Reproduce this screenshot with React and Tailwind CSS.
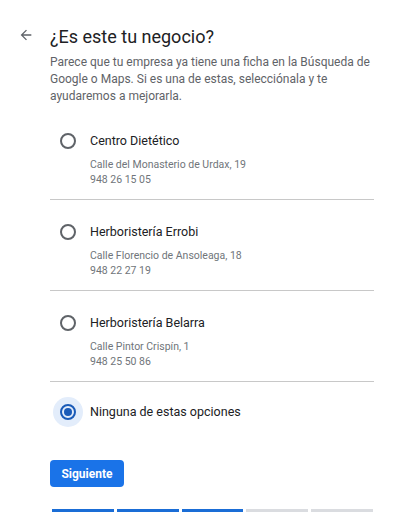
import React, { useState } from 'react';

const businesses = [
    { id: 'centro', name: 'Centro Dietético', address: 'Calle del Monasterio de Urdax, 19', phone: '948 26 15 05' },
    { id: 'errobi', name: 'Herboristería Errobi', address: 'Calle Florencio de Ansoleaga, 18', phone: '948 22 27 19' },
    { id: 'belarra', name: 'Herboristería Belarra', address: 'Calle Pintor Crispín, 1', phone: '948 25 50 86' },
];

const Radio = ({ checked }) => (
    <div className={`w-[30px] h-[30px] rounded-full flex items-center justify-center shrink-0 ${checked ? 'bg-[#e3edfb]' : ''}`}>
        <div className={`w-[16px] h-[16px] rounded-full border-2 flex items-center justify-center ${checked ? 'border-[#1a5bb8]' : 'border-[#5f6368]'}`}>
            {checked && <div className="w-[8px] h-[8px] rounded-full bg-[#1a5bb8]" />}
        </div>
    </div>
);

const App = () => {
    const [selected, setSelected] = useState('none');

    return (
        <div className="w-[401px] h-[527px] bg-white font-['Roboto',sans-serif] overflow-hidden">
            <div className="flex pt-[25px]">
                <div className="w-[50px] flex justify-center pl-[2px] pt-[2px]">
                    <svg width="16" height="16" viewBox="0 0 24 24" fill="#5f6368">
                        <path d="M20 11H7.83l5.59-5.59L12 4l-8 8 8 8 1.41-1.41L7.83 13H20v-2z" />
                    </svg>
                </div>
                <div className="w-[324px]">
                    <h1 className="text-[18px] leading-[24px] text-[#202124]">¿Es este tu negocio?</h1>
                    <p className="mt-[5px] text-[12px] leading-[17px] text-[#5f6368]">
                        Parece que tu empresa ya tiene una ficha en la Búsqueda de Google o Maps. Si es una de estas, selecciónala y te ayudaremos a mejorarla.
                    </p>

                    <div className="mt-[4px]">
                        {businesses.map((b) => (
                            <label
                                key={b.id}
                                onClick={() => setSelected(b.id)}
                                className="flex flex-col border-b border-[#c8c8c8] pt-[17px] pb-[12px] cursor-pointer"
                            >
                                <div className="flex items-center gap-[7px] pl-[3px]">
                                    <Radio checked={selected === b.id} />
                                    <span className="text-[12.5px] text-[#202124]">{b.name}</span>
                                </div>
                                <div className="pl-[40px] mt-[1px] text-[10.5px] leading-[15px] text-[#70757a]">
                                    <p>{b.address}</p>
                                    <p>{b.phone}</p>
                                </div>
                            </label>
                        ))}
                        <label
                            onClick={() => setSelected('none')}
                            className="flex items-center gap-[7px] pl-[3px] pt-[15px] cursor-pointer"
                        >
                            <Radio checked={selected === 'none'} />
                            <span className="text-[12.5px] text-[#202124]">Ninguna de estas opciones</span>
                        </label>
                    </div>

                    <button className="mt-[33px] w-[74px] h-[27px] rounded-[4px] bg-[#1a73e8] text-white text-[12px] font-bold flex items-center justify-center">
                        Siguiente
                    </button>

                    <div className="mt-[22px] ml-[2px] w-[321px] grid grid-cols-5 gap-[3px]">
                        <div className="h-[3px] bg-[#1a6dd6]" />
                        <div className="h-[3px] bg-[#1a6dd6]" />
                        <div className="h-[3px] bg-[#1a6dd6]" />
                        <div className="h-[3px] bg-[#dadce0]" />
                        <div className="h-[3px] bg-[#dadce0]" />
                    </div>
                </div>
            </div>
        </div>
    );
};

export default App;
